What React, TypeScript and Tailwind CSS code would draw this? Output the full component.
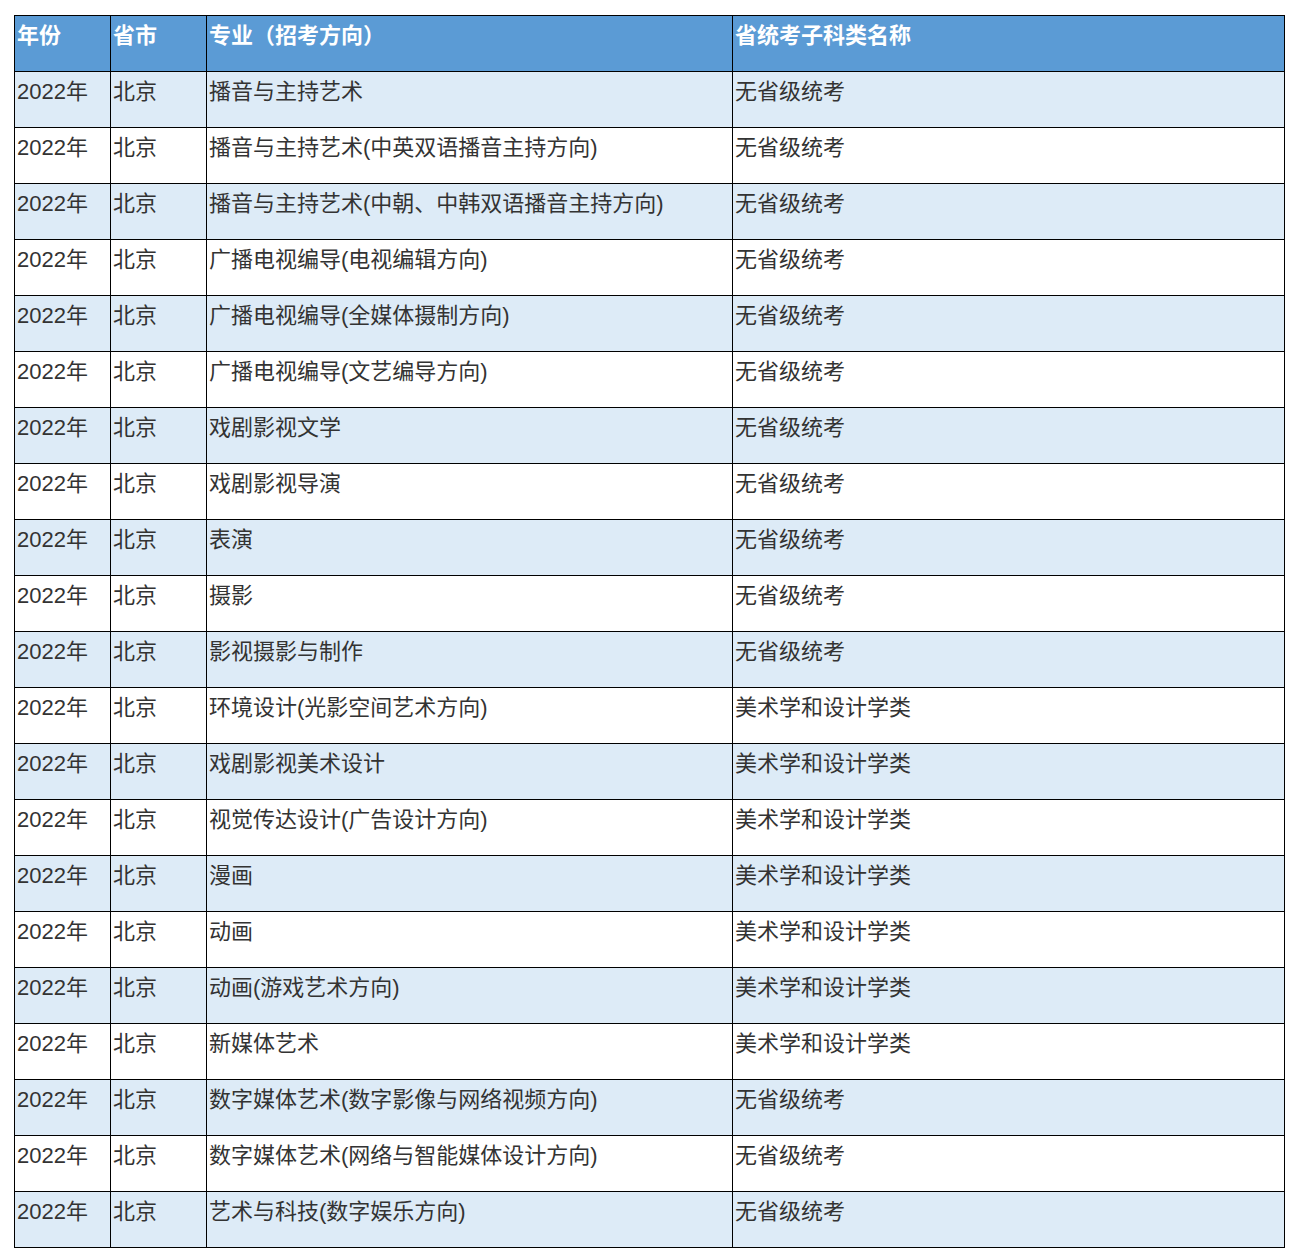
const rows: [string, string][] = [
  ["播音与主持艺术", "无省级统考"],
  ["播音与主持艺术(中英双语播音主持方向)", "无省级统考"],
  ["播音与主持艺术(中朝、中韩双语播音主持方向)", "无省级统考"],
  ["广播电视编导(电视编辑方向)", "无省级统考"],
  ["广播电视编导(全媒体摄制方向)", "无省级统考"],
  ["广播电视编导(文艺编导方向)", "无省级统考"],
  ["戏剧影视文学", "无省级统考"],
  ["戏剧影视导演", "无省级统考"],
  ["表演", "无省级统考"],
  ["摄影", "无省级统考"],
  ["影视摄影与制作", "无省级统考"],
  ["环境设计(光影空间艺术方向)", "美术学和设计学类"],
  ["戏剧影视美术设计", "美术学和设计学类"],
  ["视觉传达设计(广告设计方向)", "美术学和设计学类"],
  ["漫画", "美术学和设计学类"],
  ["动画", "美术学和设计学类"],
  ["动画(游戏艺术方向)", "美术学和设计学类"],
  ["新媒体艺术", "美术学和设计学类"],
  ["数字媒体艺术(数字影像与网络视频方向)", "无省级统考"],
  ["数字媒体艺术(网络与智能媒体设计方向)", "无省级统考"],
  ["艺术与科技(数字娱乐方向)", "无省级统考"],
];

export default function App() {
  const font = { fontFamily: '"Liberation Sans", "Noto Sans CJK SC", sans-serif' };
  const td = "border border-black align-top px-[2px] pt-[6px] h-[56px] overflow-hidden whitespace-nowrap";
  return (
    <div className="bg-white w-[1293px] h-[1249px] pt-[15px] pl-[14px]" style={font}>
      <table className="table-fixed border-collapse w-[1270px] text-[22px] leading-[28px] text-[#333333]">
        <colgroup>
          <col className="w-[96px]" />
          <col className="w-[96px]" />
          <col className="w-[526px]" />
          <col className="w-[552px]" />
        </colgroup>
        <thead>
          <tr className="bg-[#5b9bd5] text-white font-bold">
            {["年份", "省市", "专业（招考方向）", "省统考子科类名称"].map((h) => (
              <th key={h} className={td + " text-left font-bold"}>{h}</th>
            ))}
          </tr>
        </thead>
        <tbody>
          {rows.map(([a, b], i) => (
            <tr key={i} className={i % 2 === 0 ? "bg-[#ddebf7]" : "bg-white"}>
              <td className={td}>2022年</td>
              <td className={td}>北京</td>
              <td className={td}>{a}</td>
              <td className={td}>{b}</td>
            </tr>
          ))}
        </tbody>
      </table>
    </div>
  );
}
